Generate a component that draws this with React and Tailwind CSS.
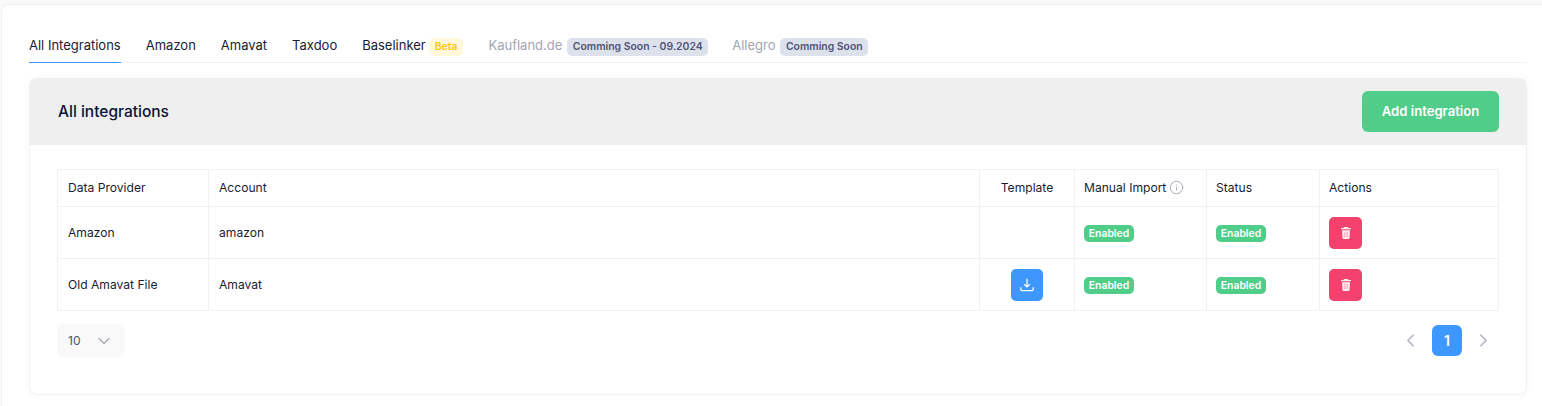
import { ChevronDown, ChevronLeft, ChevronRight, Info } from "lucide-react";

const tabs = ["Amazon", "Amavat", "Taxdoo"];

const rows = [
  { provider: "Amazon", account: "amazon", template: false },
  { provider: "Old Amavat File", account: "Amavat", template: true },
];

function EnabledBadge() {
  return (
    <span className="inline-flex h-[17px] w-[50px] items-center justify-center rounded-[5px] bg-[#50cd89] text-[10.4px] font-semibold text-white">
      Enabled
    </span>
  );
}

function SoonBadge({ children }) {
  return (
    <span className="ml-[5px] mt-[2px] inline-flex h-[18px] items-center rounded-[5px] bg-[#dde1ec] px-[5.5px] text-[10.4px] font-semibold text-[#4f5578]">
      {children}
    </span>
  );
}

function TrashIcon() {
  return (
    <svg width="14" height="14" viewBox="0 0 14 14" aria-hidden="true">
      <path d="M5 1h4l.5 1H12v1.300H2V2h2.500z" fill="#fff" opacity="0.9" />
      <path d="M3 4.200h8l-.5 8a1 1 0 0 1-1 .8h-5a1 1 0 0 1-1-.8z" fill="#fff" opacity="0.9" />
      <path d="M5.400 5.800v5.500M7 5.800v5.500M8.600 5.800v5.500" stroke="#f9a8c0" strokeWidth="0.8" />
    </svg>
  );
}

function DownloadIcon() {
  return (
    <svg width="14" height="14" viewBox="0 0 14 14" fill="none" stroke="#fff" strokeWidth="1.3" aria-hidden="true">
      <path d="M7 .8v8M4.200 6.200 7 8.900l2.800-2.700" />
      <path d="M.8 9.200v2a1.500 1.500 0 0 0 1.500 1.500h9.400a1.500 1.500 0 0 0 1.500-1.500v-2" />
    </svg>
  );
}

export default function App() {
  return (
    <div className="h-[406px] w-full overflow-hidden bg-[#f9f9f9] pl-[1px] pt-[4px] font-['Inter',sans-serif] text-[13px] text-[#181c32]">
      <div className="h-[402px] rounded-tl-[8px] border-l border-t border-[#f1f1f4] bg-white pl-[27px] pr-[15px] pt-[29px]">
        {/* Tabs */}
        <div className="flex h-[29px] items-start gap-[25px] border-b border-[#eff2f5] text-[13px] text-[#181c32]">
          <div className="h-[29px] border-b border-[#3e97ff] pt-[2px]">All Integrations</div>
          {tabs.map((t) => (
            <div key={t} className="pt-[2px]">{t}</div>
          ))}
          <div className="flex items-center pt-[2px]">
            Baselinker
            <span className="ml-[3px] mt-[2px] inline-flex h-[18px] items-center rounded-[5px] bg-[#fff8dd] px-[6px] text-[10.4px] font-semibold text-[#ffc700]">
              Beta
            </span>
          </div>
          <div className="flex items-center pt-[2px] text-[#a1a5b7]">
            Kaufland.de
            <SoonBadge>Comming Soon - 09.2024</SoonBadge>
          </div>
          <div className="-ml-[1px] flex items-center pt-[2px] text-[#a1a5b7]">
            Allegro
            <SoonBadge>Comming Soon</SoonBadge>
          </div>
        </div>

        {/* Card */}
        <div className="mt-[15px] h-[317px] rounded-[8px] bg-white shadow-[0_0_10px_rgba(76,87,125,0.04)]">
          <div className="flex h-[67px] items-center justify-between rounded-t-[8px] bg-[#efefef] pl-[29px] pr-[28px]">
            <h3 className="pt-[1px] text-[15.5px] font-medium text-[#071437]">All integrations</h3>
            <button className="h-[41px] w-[137px] rounded-[6px] bg-[#50cd89] text-[13.100px] font-semibold text-white">
              Add integration
            </button>
          </div>

          <div className="h-[250px] rounded-b-[8px] border-x border-b border-[#f1f1f4] px-[27px] pt-[24px]">
            <table className="w-full table-fixed border-collapse border border-[#eff2f5] text-[12.100px] text-[#181c32]">
              <colgroup>
                <col className="w-[151px]" />
                <col />
                <col className="w-[95px]" />
                <col className="w-[132px]" />
                <col className="w-[113px]" />
                <col className="w-[179px]" />
              </colgroup>
              <thead>
                <tr className="h-[37px] border-b border-[#eff2f5]">
                  <th className="border-r border-[#eff2f5] px-[10px] text-left font-normal">Data Provider</th>
                  <th className="border-r border-[#eff2f5] px-[10px] text-left font-normal">Account</th>
                  <th className="border-r border-[#eff2f5] px-[10px] text-center font-normal">Template</th>
                  <th className="border-r border-[#eff2f5] px-[9px] text-left font-normal">
                    <span className="flex items-center gap-[3px]">
                      Manual Import
                      <Info size={15} strokeWidth={1.5} className="text-[#a1a5b7]" />
                    </span>
                  </th>
                  <th className="border-r border-[#eff2f5] px-[9px] text-left font-normal">Status</th>
                  <th className="px-[9px] text-left font-normal">Actions</th>
                </tr>
              </thead>
              <tbody>
                {rows.map((r) => (
                  <tr key={r.provider} className="h-[52px] border-b border-[#eff2f5]">
                    <td className="border-r border-[#eff2f5] px-[10px] pt-[2px]">{r.provider}</td>
                    <td className="border-r border-[#eff2f5] px-[10px] pt-[2px]">{r.account}</td>
                    <td className="border-r border-[#eff2f5] px-[10px]">
                      {r.template && (
                        <button className="mx-auto flex h-8 w-8 items-center justify-center rounded-[5px] bg-[#3e97ff] text-white">
                          <DownloadIcon />
                        </button>
                      )}
                    </td>
                    <td className="border-r border-[#eff2f5] px-[9px] pt-[2px]"><div className="flex"><EnabledBadge /></div></td>
                    <td className="border-r border-[#eff2f5] px-[9px] pt-[2px]"><div className="flex"><EnabledBadge /></div></td>
                    <td className="px-[9px]">
                      <button className="flex h-8 w-[33px] items-center justify-center rounded-[5px] bg-[#f1416c]">
                        <TrashIcon />
                      </button>
                    </td>
                  </tr>
                ))}
              </tbody>
            </table>

            <div className="mt-[13px] flex items-start justify-between">
              <div className="flex h-[33px] w-[68px] items-center justify-between rounded-[6px] bg-[#f9f9f9] pl-[11px] pr-[11px] text-[12px] leading-[32px] text-[#4b5675]">
                10
                <ChevronDown size={20} strokeWidth={1.2} className="text-[#5e6278]" />
              </div>
              <div className="mt-[1px] flex h-[31px] items-center gap-[11px] pr-[5px]">
                <ChevronLeft size={21} strokeWidth={2} className="text-[#b5b5c8]" />
                <span className="flex h-[31px] w-[30px] items-center justify-center rounded-[6px] bg-[#3e97ff] text-[14px] font-semibold text-white">1</span>
                <ChevronRight size={21} strokeWidth={2} className="text-[#b5b5c8]" />
              </div>
            </div>
          </div>
        </div>
      </div>
    </div>
  );
}
